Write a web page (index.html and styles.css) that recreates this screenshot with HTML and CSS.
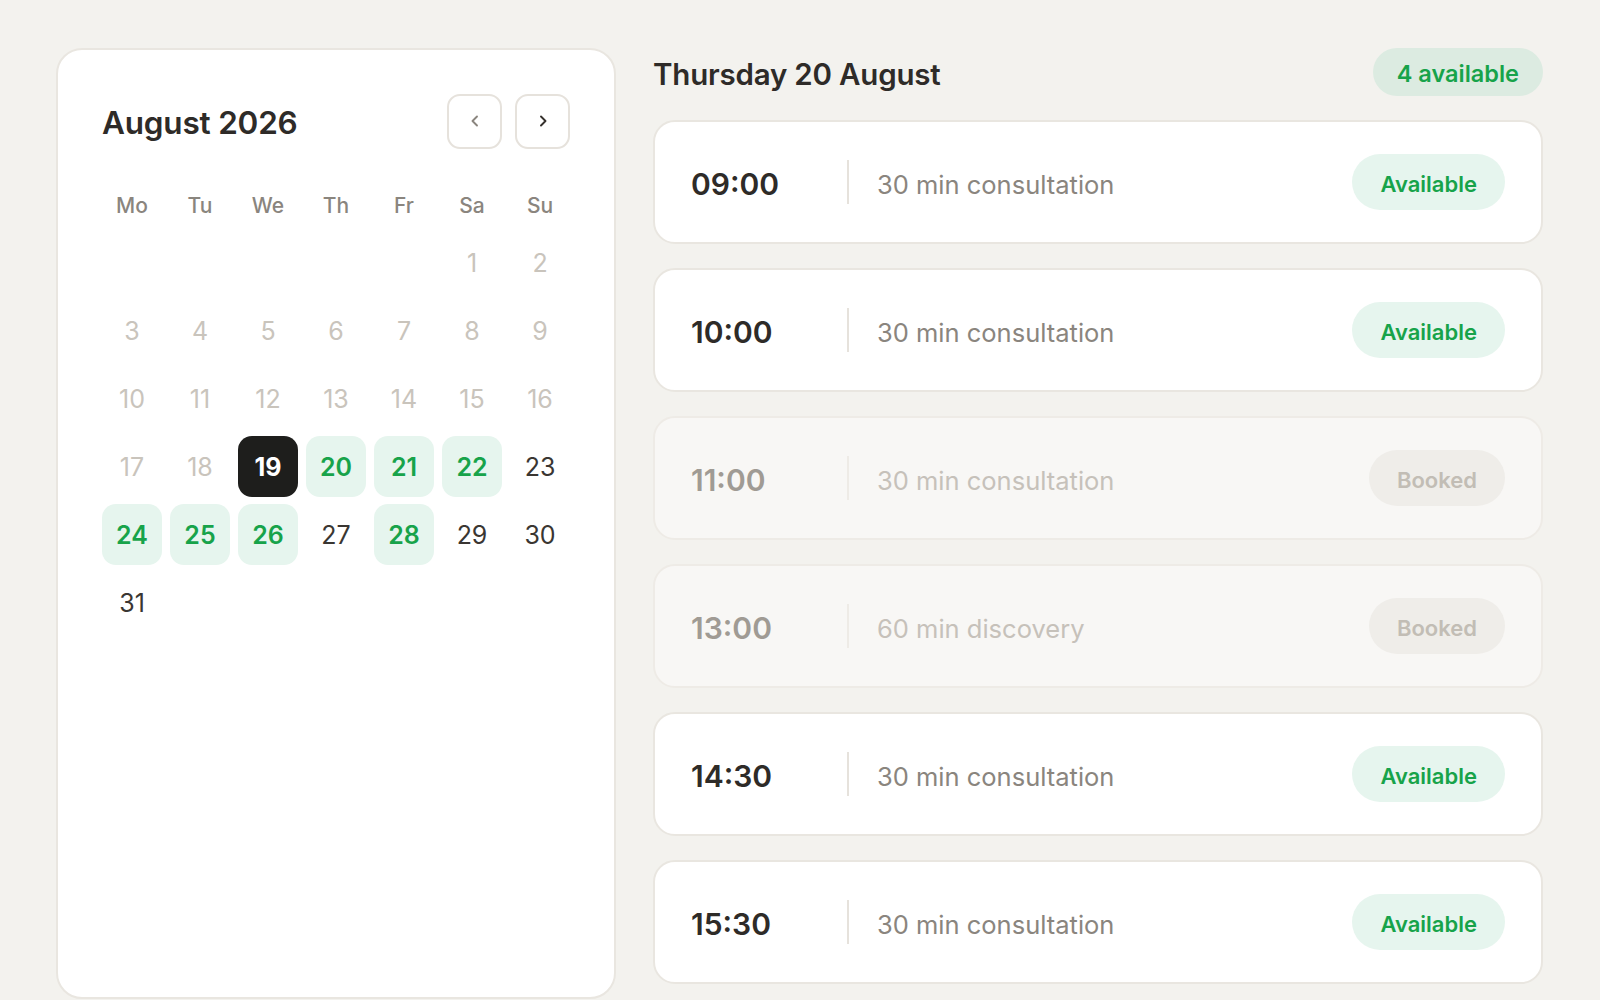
FILE: index.html
```html
<!DOCTYPE html>
<html lang="en">
    <head>
        <meta charset="UTF-8">
        <title>Book a consultation</title>
        <link rel="stylesheet" href="styles.css">
    </head>
    <body>
        <main class="booking">
            <section class="calendar">
                <div class="calendar-head">
                    <h2>August 2026</h2>
                    <div class="nav">
                        <button class="nav-btn prev" aria-label="Previous month">
                            <svg width="16" height="16" viewBox="0 0 16 16"><polyline points="10,3.5 5.5,8 10,12.5" /></svg>
                        </button>
                        <button class="nav-btn" aria-label="Next month">
                            <svg width="16" height="16" viewBox="0 0 16 16"><polyline points="6,3.5 10.5,8 6,12.5" /></svg>
                        </button>
                    </div>
                </div>
                <div class="weekdays">
                    <span>Mo</span><span>Tu</span><span>We</span><span>Th</span><span>Fr</span><span>Sa</span><span>Su</span>
                </div>
                <div class="days">
                    <span></span><span></span><span></span><span></span><span></span>
                    <span class="day past">1</span>
                    <span class="day past">2</span>
                    <span class="day past">3</span>
                    <span class="day past">4</span>
                    <span class="day past">5</span>
                    <span class="day past">6</span>
                    <span class="day past">7</span>
                    <span class="day past">8</span>
                    <span class="day past">9</span>
                    <span class="day past">10</span>
                    <span class="day past">11</span>
                    <span class="day past">12</span>
                    <span class="day past">13</span>
                    <span class="day past">14</span>
                    <span class="day past">15</span>
                    <span class="day past">16</span>
                    <span class="day past">17</span>
                    <span class="day past">18</span>
                    <span class="day today">19</span>
                    <span class="day open">20</span>
                    <span class="day open">21</span>
                    <span class="day open">22</span>
                    <span class="day">23</span>
                    <span class="day open">24</span>
                    <span class="day open">25</span>
                    <span class="day open">26</span>
                    <span class="day">27</span>
                    <span class="day open">28</span>
                    <span class="day">29</span>
                    <span class="day">30</span>
                    <span class="day">31</span>
                </div>
            </section>
            <section class="slots">
                <div class="slots-head">
                    <h2>Thursday 20 August</h2>
                    <span class="count">4 available</span>
                </div>
                <div class="slot">
                    <span class="slot-time">09:00</span>
                    <span class="divider"></span>
                    <span class="slot-desc">30 min consultation</span>
                    <span class="status">Available</span>
                </div>
                <div class="slot">
                    <span class="slot-time">10:00</span>
                    <span class="divider"></span>
                    <span class="slot-desc">30 min consultation</span>
                    <span class="status">Available</span>
                </div>
                <div class="slot booked">
                    <span class="slot-time">11:00</span>
                    <span class="divider"></span>
                    <span class="slot-desc">30 min consultation</span>
                    <span class="status">Booked</span>
                </div>
                <div class="slot booked">
                    <span class="slot-time">13:00</span>
                    <span class="divider"></span>
                    <span class="slot-desc">60 min discovery</span>
                    <span class="status">Booked</span>
                </div>
                <div class="slot">
                    <span class="slot-time">14:30</span>
                    <span class="divider"></span>
                    <span class="slot-desc">30 min consultation</span>
                    <span class="status">Available</span>
                </div>
                <div class="slot">
                    <span class="slot-time">15:30</span>
                    <span class="divider"></span>
                    <span class="slot-desc">30 min consultation</span>
                    <span class="status">Available</span>
                </div>
            </section>
        </main>
    </body>
</html>
```
FILE: styles.css
```css
*{
    box-sizing: border-box;
}
body{
    font-family: Inter, "Noto Sans", sans-serif;
    margin: 0;
    padding: 0;
    background-color: #F3F2EE;
    color: #2E2B28;
}
h2{
    margin: 0;
}
.booking{
    display: grid;
    grid-template-columns: 560px 1fr;
    gap: 37px;
    min-height: 100vh;
    padding: 48px 57px 1px 56px;
}
/* calendar card */
.calendar{
    background-color: #FFF;
    border: 2px solid #E9E6E0;
    border-radius: 26px;
    padding: 44px 44px;
}
.calendar-head{
    display: flex;
    align-items: center;
    justify-content: space-between;
    height: 54px;
}
.calendar-head h2{
    font-size: 31.5px;
    font-weight: 600;
    color: #2E2B28;
    letter-spacing: -0.2px;
    padding-top: 3px;
}
.nav{
    display: flex;
    gap: 13px;
}
.nav-btn{
    width: 55px;
    height: 55px;
    border: 2px solid #E6E2DC;
    border-radius: 13px;
    background: #FFF;
    display: flex;
    align-items: center;
    justify-content: center;
    padding: 0;
    cursor: pointer;
}
.nav-btn svg polyline{
    fill: none;
    stroke: #35312D;
    stroke-width: 1.9;
    stroke-linecap: round;
    stroke-linejoin: round;
}
.nav-btn.prev svg polyline{
    stroke: #8A857E;
}
.weekdays{
    display: grid;
    grid-template-columns: repeat(7, 1fr);
    gap: 8px;
    margin-top: 42px;
    height: 30px;
    align-items: center;
}
.weekdays span{
    text-align: center;
    font-size: 21px;
    font-weight: 500;
    color: #8A857E;
}
.days{
    display: grid;
    grid-template-columns: repeat(7, 1fr);
    grid-auto-rows: 61px;
    gap: 7px 8px;
    margin-top: 12px;
}
.day{
    display: flex;
    align-items: center;
    justify-content: center;
    border-radius: 14px;
    font-size: 25px;
    color: #3A3632;
}
.day.past{
    color: #C9C4BC;
}
.day.open{
    background-color: #E6F5EE;
    color: #17A34A;
    font-weight: 600;
}
.day.today{
    background-color: #1E1E1C;
    color: #FFF;
    font-weight: 700;
}
/* time slots */
.slots{
    display: flex;
    flex-direction: column;
    gap: 24px;
}
.slots-head{
    display: flex;
    align-items: center;
    justify-content: space-between;
    height: 48px;
}
.slots-head h2{
    font-size: 29.5px;
    font-weight: 600;
    color: #2E2B28;
    letter-spacing: -0.2px;
    padding-top: 3px;
}
.count{
    background-color: #DCEBE1;
    color: #17A34A;
    font-size: 23.5px;
    font-weight: 600;
    height: 48px;
    padding: 2px 24px 0;
    border-radius: 24px;
    display: flex;
    align-items: center;
}
.slot{
    display: flex;
    align-items: center;
    height: 124px;
    padding: 0 36px;
    background-color: #FFF;
    border: 2px solid #E9E6E0;
    border-radius: 22px;
}
.slot-time{
    width: 156px;
    padding-top: 4px;
    font-size: 30px;
    font-weight: 600;
    color: #2E2B28;
}
.divider{
    width: 2px;
    height: 44px;
    background-color: #E6E2DC;
    margin-right: 28px;
}
.slot-desc{
    flex: 1;
    padding-top: 4px;
    font-size: 25.5px;
    color: #8A857E;
}
.status{
    height: 56px;
    padding: 3px 28px 0;
    border-radius: 28px;
    display: flex;
    align-items: center;
    background-color: #E6F5EE;
    color: #17A34A;
    font-size: 22px;
    font-weight: 600;
}
.slot.booked{
    background-color: #F8F7F5;
    border-color: #EEEBE6;
}
.slot.booked .slot-time{
    color: #A09B94;
}
.slot.booked .divider{
    background-color: #EEEBE6;
}
.slot.booked .slot-desc{
    color: #C6C1BA;
}
.slot.booked .status{
    background-color: #EFEDE9;
    color: #C2BDB5;
}
```
